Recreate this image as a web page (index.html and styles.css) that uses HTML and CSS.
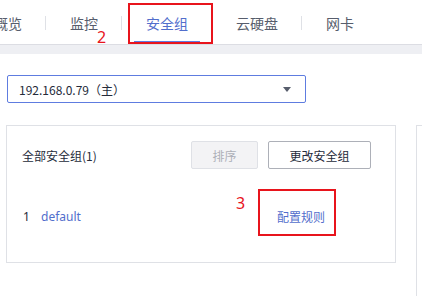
FILE: index.html
```html
<!DOCTYPE html>
<html lang="zh-CN">
<head>
<meta charset="utf-8">
<link rel="stylesheet" href="styles.css">
</head>
<body>
<div class="page">
  <nav class="tabs">
    <div class="tab tab-first">概览</div>
    <span class="sep"></span>
    <div class="tab">监控</div>
    <span class="sep"></span>
    <div class="tab active">安全组</div>
    <span class="sep"></span>
    <div class="tab">云硬盘</div>
    <span class="sep"></span>
    <div class="tab">网卡</div>
  </nav>
  <div class="band"></div>
  <main class="content">
    <div class="select">
      <span class="select-text">192.168.0.79（主）</span>
      <span class="caret"></span>
    </div>
    <div class="cards">
      <section class="card">
        <div class="card-head">
          <span class="title">全部安全组(1)</span>
          <div class="btns">
            <button class="btn btn-disabled">排序</button>
            <button class="btn">更改安全组</button>
          </div>
        </div>
        <div class="row">
          <span class="idx">1</span>
          <span class="name">default</span>
          <span class="action">配置规则</span>
        </div>
      </section>
      <section class="card card-side"></section>
    </div>
  </main>
  <div class="mark mark-tab"></div>
  <div class="num num-2">2</div>
  <div class="mark mark-rule"></div>
  <div class="num num-3">3</div>
</div>
</body>
</html>
```
FILE: styles.css
```css
* { box-sizing: border-box; }
html, body { margin: 0; padding: 0; background: #fff; }
body {
  font-family: "Noto Sans", "Noto Sans CJK SC", sans-serif;
  color: #252b3a;
  width: 422px;
  height: 296px;
  overflow: hidden;
}
.page { position: relative; width: 422px; height: 296px; overflow: hidden; }

.tabs {
  display: flex;
  align-items: center;
  height: 45px;
  border-bottom: 1px solid #dcdde3;
  margin-left: -30px;
  white-space: nowrap;
}
.tab {
  position: relative;
  height: 44px;
  padding: 1px 23px 0 24px;
  font-size: 14px;
  color: #575d6c;
  font-family: "Noto Sans CJK SC", sans-serif;
  line-height: 44px;
}
.tab.active { color: #526ecc; }
.tab.active::after {
  content: "";
  position: absolute;
  left: 12px;
  right: 11px;
  top: 41px;
  height: 2px;
  background: #5e7ce0;
}
.sep {
  width: 1px;
  height: 14px;
  background: #dfe1e6;
  flex: none;
  margin-top: 2px;
}
.band { height: 9px; background: #eeeff3; }

.content { padding: 21px 0 0 7px; }
.select {
  display: flex;
  align-items: center;
  justify-content: space-between;
  width: 299px;
  height: 28px;
  border: 1px solid #5e7ce0;
  border-radius: 2px;
  padding: 0 11px;
}
.select-text {
  font-size: 12px;
  color: #252b3a;
  font-family: "Noto Sans CJK SC", sans-serif;
}
.caret {
  width: 0; height: 0;
  border-left: 4px solid transparent;
  border-right: 4px solid transparent;
  border-top: 5px solid #575d6c;
  margin-right: 3px;
}

.cards {
  display: flex;
  gap: 20px;
  margin-top: 22px;
  margin-left: -1px;
}
.card {
  flex: none;
  width: 390px;
  height: 138px;
  border: 1px solid #dfe1e6;
  padding: 15px 24px 0 15px;
}
.card-side {
  width: 6px;
  height: 171px;
  padding: 0;
  border-right: none;
  border-bottom: none;
}
.card-head {
  display: flex;
  align-items: center;
  justify-content: space-between;
  height: 28px;
}
.title { font-size: 12px; font-family: "Noto Sans CJK SC", sans-serif; }
.btns { display: flex; gap: 10px; }
.btn {
  height: 28px;
  padding: 0;
  font-size: 12px;
  font-family: "Noto Sans CJK SC", sans-serif;
  background: #fff;
  color: #252b3a;
  border: 1px solid #adb0b8;
  border-radius: 2px;
  width: 103px;
}
.btn-disabled {
  width: 67px;
  background: #f3f3f5;
  border-color: #dfe1e6;
  color: #adb0b8;
}
.row {
  display: flex;
  align-items: center;
  height: 28px;
  margin-top: 33px;
  font-size: 12px;
}
.idx { width: 19px; color: #252b3a; padding-left: 1px; }
.name { flex: 1; color: #526ecc; }
.action {
  color: #526ecc;
  font-family: "Noto Sans CJK SC", sans-serif;
  margin-right: 46px;
}

.mark {
  position: absolute;
  border: 2px solid #e8141c;
}
.mark-tab { left: 128px; top: 3px; width: 85px; height: 41px; }
.mark-rule { left: 258px; top: 189px; width: 78px; height: 47px; }
.num {
  position: absolute;
  color: #e8141c;
  font-size: 16px;
  line-height: 16px;
  font-family: "Noto Sans", sans-serif;
}
.num-2 { left: 97px; top: 29px; }
.num-3 { left: 236px; top: 195px; }
```
